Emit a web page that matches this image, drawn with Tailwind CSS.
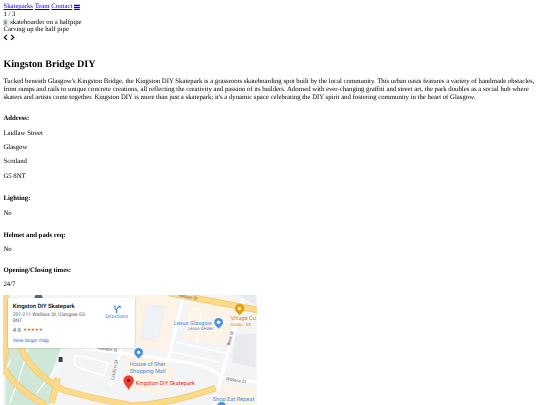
<!DOCTYPE html>
<html lang="en" class="overflow-hidden">
<head>
<meta charset="utf-8">
<title>Kingston Bridge DIY</title>
<script src="https://cdn.jsdelivr.net/npm/@tailwindcss/browser@4"></script>
</head>
<body class="overflow-hidden h-[405px] bg-white">
<div class="[zoom:0.421875] w-[1280px] p-2 text-[16px] leading-[18px] text-black font-['Liberation_Serif',serif] [text-rendering:geometricPrecision] blur-[0.6px]">
  <nav class="flex items-center gap-[4px]">
    <a href="#" class="underline text-[#0000ee]">Skateparks</a>
    <a href="#" class="underline text-[#0000ee]">Team</a>
    <a href="#" class="underline text-[#0000ee]">Contact</a>
    <svg class="w-[14px] h-[16px]" viewBox="0 0 14 16" aria-hidden="true"><path fill="#0000ee" d="M0 2h14v3H0zM0 6.5h14v3H0zM0 11h14v3H0z"/></svg>
  </nav>
  <div>1 / 3</div>
  <div class="flex items-center">
    <svg class="w-[16px] h-[16px]" viewBox="0 0 16 16" aria-hidden="true"><path fill="#fff" stroke="#a0a0a0" d="M1.5 1.5h9l4 4v9h-13z"/><path fill="#8ab4e8" d="M3 3h7v5H3z"/><path fill="#6aa84f" d="M3 8l3-3 4 4-2 4H3z"/></svg>
    <span>skateboarder on a halfpipe</span>
  </div>
  <div>Carving up the half pipe</div>
  <div class="flex items-center gap-[4px] h-[18px]">
    <svg class="w-[12px] h-[16px]" viewBox="0 0 12 16" aria-hidden="true"><path fill="none" stroke="#111" stroke-width="3" d="M9.5 2L3 8l6.5 6"/></svg>
    <svg class="w-[12px] h-[16px]" viewBox="0 0 12 16" aria-hidden="true"><path fill="none" stroke="#111" stroke-width="3" d="M2.5 2L9 8l-6.5 6"/></svg>
  </div>
  <h1 class="mt-[41px] mb-[19px] text-[24px] leading-[28px] font-bold">Kingston Bridge DIY</h1>
  <p>Tucked beneath Glasgow's Kingston Bridge, the Kingston DIY Skatepark is a grassroots skateboarding spot built by the local community. This urban oasis features a variety of handmade obstacles, from ramps and rails to unique concrete creations, all reflecting the creativity and passion of its builders. Adorned with ever-changing graffiti and street art, the park doubles as a social hub where skaters and artists come together. Kingston DIY is more than just a skatepark; it's a dynamic space celebrating the DIY spirit and fostering community in the heart of Glasgow.</p>
  <h4 class="mt-[33px] mb-[16px] font-bold">Address:</h4>
  <p class="mb-[16px]">Laidlaw Street</p>
  <p class="mb-[16px]">Glasgow</p>
  <p class="mb-[16px]">Scotland</p>
  <p>G5 8NT</p>
  <h4 class="mt-[36px] mb-[16px] font-bold">Lighting:</h4>
  <p>No</p>
  <h4 class="mt-[34px] mb-[16px] font-bold">Helmet and pads req:</h4>
  <p>No</p>
  <h4 class="mt-[31px] mb-[16px] font-bold">Opening/Closing times:</h4>
  <p>24/7</p>

  <div class="relative mt-[16px] w-[600px] h-[450px] overflow-hidden font-['Roboto',sans-serif]">
    <svg class="block w-[600px] h-[450px]" viewBox="3.375 295 253.125 189.84" aria-hidden="false" font-family="Roboto, sans-serif">
      <rect x="0" y="290" width="260" height="200" fill="#f3f4f6"/>
      <!-- green -->
      <path fill="#cfe7d6" d="M6 340H64L50 378L56 385L50 405H6Z"/>
      <!-- peach blocks -->
      <path fill="#fdf3e6" d="M128 295H180L168 352L128 346Z"/>
      <path fill="#fdf3e6" d="M126 355L168 362L176 372L166 394L124 390Z"/>
      <path fill="#fdf3e6" d="M190 298H236L226 345L182 338Z"/>
      <path fill="#fdf3e6" d="M222 384L256 388V405H216Z"/>
      <path fill="#eef1f6" stroke="#f7e6d3" stroke-width=".5" d="M146 304L165 307L158 342L141 338Z"/>
      <path fill="#e8eaed" d="M236 334H256V368L232 362Z"/>
      <path fill="#e8eaed" d="M238 295H256V305Z"/>
      <!-- outlined park shapes -->
      <path fill="none" stroke="#fff" stroke-width="1.4" d="M75 358Q76 354 82 356L108 363L104 376L78 367Q74 365 75 358Z"/>
      <path fill="none" stroke="#fff" stroke-width="1.4" d="M188 338L190 316Q192 307 198 309Q202 311 201 320L197 342"/>
      <path stroke="#fff" stroke-width="1.6" d="M177 342L228 354M172 352L220 362"/>
      <!-- white roads -->
      <g fill="none" stroke="#fff" stroke-linecap="round">
        <path stroke-width="3" d="M184 295L168 362"/>
        <path stroke-width="3" d="M243 300L222 376L214 405"/>
        <path stroke-width="3" d="M66 346L130 354L196 364Q212 368 222 377L256 382"/>
        <path stroke-width="2.6" d="M122 348L111 386"/>
        <path stroke-width="1.2" d="M28 348Q24 368 10 403"/>
        <path stroke-width="1.2" d="M64 360L44 384L37 393"/>
        <path stroke-width="1.2" d="M6 352L12 345M5 372L11 360"/>
      </g>
      <!-- yellow roads -->
      <g fill="none" stroke-linecap="butt">
        <g stroke="#f4c868" stroke-width="6.4">
          <path d="M20 345Q30 372 64 390Q90 398 130 405"/>
          <path d="M2 364Q14 388 46 405"/>
          <path d="M6 295V350Q6 358 2 364"/>
          <path d="M58 378L52 403"/>
          <path d="M128 406Q172 404 216 388"/>
          <path d="M170 293L258 310"/>
        </g>
        <g stroke="#fbda8a" stroke-width="5">
          <path d="M20 345Q30 372 64 390Q90 398 130 405"/>
          <path d="M2 364Q14 388 46 405"/>
          <path d="M6 295V350Q6 358 2 364"/>
          <path d="M58 378L52 403"/>
          <path d="M128 406Q172 404 216 388"/>
          <path d="M170 293L258 310"/>
        </g>
      </g>
      <!-- markers -->
      <path fill="#4e6a85" d="M35 298a4 4 0 0 1 8 0z"/>
      <rect x="59" y="357" width="4" height="5" rx=".6" fill="#3c4043"/>
      <g fill="#4a90e2">
        <path d="M139 348c-2.8 0-4.4 2-4.4 4.2c0 2.8 3 4.6 4.4 6.6c1.4-2 4.4-3.8 4.4-6.6c0-2.2-1.6-4.2-4.4-4.2z"/>
        <path d="M219 318c-2.8 0-4.4 2-4.4 4.2c0 2.8 3 4.6 4.4 6.6c1.4-2 4.4-3.8 4.4-6.6c0-2.2-1.6-4.2-4.4-4.2z"/>
        <path d="M222 402c-2.8 0-4.4 2-4.4 4.2c0 2.8 3 4.6 4.4 6.6c1.4-2 4.4-3.8 4.4-6.6c0-2.2-1.6-4.2-4.4-4.2z"/>
      </g>
      <circle cx="139" cy="352.3" r="1.6" fill="#fff"/><circle cx="219" cy="322.3" r="1.8" fill="#fff"/>
      <path fill="#f29900" d="M240 304c-3 0-4.6 2.1-4.6 4.4c0 2.9 3.2 4.8 4.6 7c1.4-2.2 4.6-4.1 4.6-7c0-2.3-1.6-4.4-4.6-4.4z"/>
      <circle cx="240" cy="308.5" r="1.7" fill="#fff"/>
      <path fill="#ea4335" d="M129 375.5c-3.4 0-5.2 2.5-5.2 5c0 3.5 3.8 5.8 5.2 9.5c1.4-3.7 5.2-6 5.2-9.5c0-2.5-1.8-5-5.2-5z"/>
      <circle cx="129" cy="380.5" r="1.7" fill="#a50e0e"/>
      <!-- labels -->
      <g font-size="5.7">
        <text x="130" y="366" fill="#4a90d9">House of Sher</text>
        <text x="130" y="373" fill="#4a90d9">Shopping Mall</text>
        <text x="174" y="325" fill="#4a90d9">Lexus Glasgow</text>
        <text x="188" y="330" font-size="4.6" fill="#4a90d9">Lexus dealer</text>
        <text x="231" y="320" fill="#e08a00">Village Cu</text>
        <text x="231" y="326" font-size="4.4" fill="#e08a00">Indian · ££</text>
        <text x="136" y="385" fill="#d93025">Kingston DIY Skatepark</text>
        <text x="213" y="401" fill="#4a90d9">Shop Eat Repeat</text>
      </g>
      <g font-size="4.4" fill="#5f6368">
        <text transform="translate(179 296.5) rotate(11)">Nelson St</text>
        <text transform="translate(97 349) rotate(8)">Wallace St</text>
        <text transform="translate(226 380) rotate(9)">Wallace St</text>
        <text transform="translate(230 346) rotate(-74)">West St</text>
        <text transform="translate(114 380) rotate(-77)">Laidlaw St</text>
      </g>
    </svg>
    <div class="absolute left-[10px] top-[7px] w-[303px] h-[118px] bg-white shadow-[0_1px_4px_-1px_rgba(0,0,0,0.3)] pl-[12px] pt-[11px] leading-normal">
      <div class="text-[14px] leading-[20px] font-medium text-black">Kingston DIY Skatepark</div>
      <div class="w-[180px] text-[12px] leading-[14px] text-[#5b5b5b] mt-[3px]">201-211 Wallace St, Glasgow G5 8NT</div>
      <div class="flex items-center gap-[5px] mt-[5px] text-[14px] leading-[20px] text-[#5b5b5b]">4.9 <span class="text-[11px] tracking-[-0.5px] text-[#e7711b]">★★★★★</span></div>
      <div class="text-[12px] leading-[14px] text-[#1a73e8] mt-[10px]">View larger map</div>
      <div class="absolute left-[228px] top-[16px] w-[62px] flex flex-col items-center text-[#3a84df]">
        <svg class="w-[20px] h-[20px]" viewBox="0 0 22 22" aria-hidden="true"><path fill="none" stroke="#3a84df" stroke-width="3" d="M9 21V13L4 7M15 4L9 13"/><path fill="#3a84df" d="M1 2h6v6zM12 2h8v8z"/></svg>
        <span class="text-[12px] leading-[14px] mt-[4px]">Directions</span>
      </div>
    </div>
  </div>
</div>
</body>
</html>
